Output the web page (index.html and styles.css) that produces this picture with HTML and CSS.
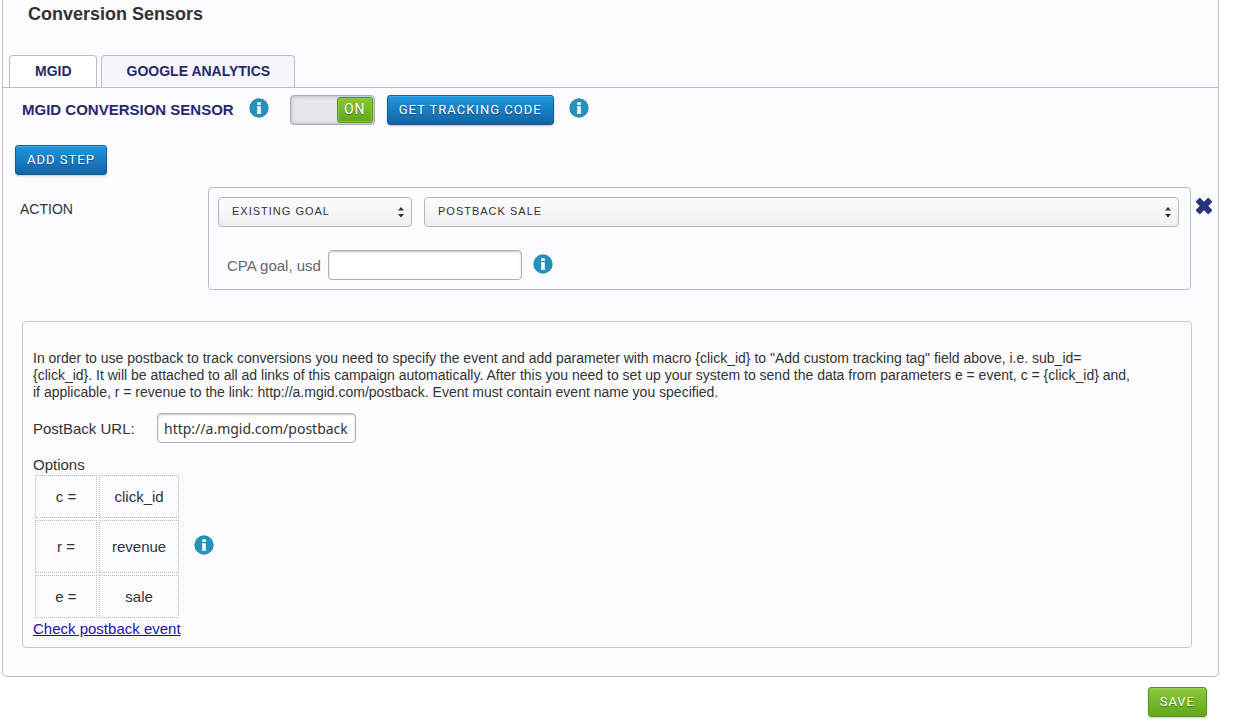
FILE: index.html
```
<!DOCTYPE html>
<html lang="en">
<head>
    <meta charset="UTF-8">
    <title>Conversion Sensors</title>
    <link rel="stylesheet" href="styles.css">
</head>
<body>
    <!-- shared icons -->
    <svg class="sprite" aria-hidden="true">
        <symbol id="icon-info" viewBox="0 0 20 20">
            <circle cx="10" cy="10" r="9.7" fill="#2492b8"/>
            <path fill="#fff" d="M8.3 4.2h3.5v2.7H8.3zM7.9 8.2h3.9v6.4h.4v1.2H7.9v-1.2h.4V9.6h-.4z"/>
        </symbol>
        <symbol id="icon-remove" viewBox="0 0 18 18">
            <path fill="#27357a" stroke="#27357a" stroke-width="2" stroke-linejoin="round" d="M4.8 1.9L9 6.1l4.2-4.2 2.9 2.9L11.9 9l4.2 4.2-2.9 2.9L9 11.9l-4.2 4.2-2.9-2.9L6.1 9 1.9 4.8z"/>
        </symbol>
    </svg>

    <form class="page">
        <div class="panel">
            <h1>Conversion Sensors</h1>

            <div class="tabs">
                <button type="button" class="tab active">MGID</button>
                <button type="button" class="tab">GOOGLE ANALYTICS</button>
            </div>

            <div class="sensor-row">
                <label class="sensor-title" for="sensor-switch">MGID CONVERSION SENSOR</label>
                <svg class="info"><use href="#icon-info"/></svg>
                <label class="switch">
                    <input type="checkbox" id="sensor-switch" checked>
                    <span class="knob">ON</span>
                </label>
                <button type="button" class="btn btn-blue">GET TRACKING CODE</button>
                <svg class="info"><use href="#icon-info"/></svg>
            </div>

            <button type="button" class="btn btn-blue add-step">ADD STEP</button>

            <div class="step">
                <div class="step-label">ACTION</div>
                <div class="step-box">
                    <div class="selects">
                        <div class="select-wrap goal-type">
                            <select aria-label="Goal type">
                                <option>EXISTING GOAL</option>
                            </select>
                            <svg class="arrows" viewBox="0 0 6 10"><path d="M0 3.5L3 0l3 3.5zM0 7l3 3.5L6 7z" fill="#333"/></svg>
                        </div>
                        <div class="select-wrap goal-name">
                            <select aria-label="Goal">
                                <option>POSTBACK SALE</option>
                            </select>
                            <svg class="arrows" viewBox="0 0 6 10"><path d="M0 3.5L3 0l3 3.5zM0 7l3 3.5L6 7z" fill="#333"/></svg>
                        </div>
                    </div>
                    <div class="cpa-row">
                        <label for="cpa">CPA goal, usd</label>
                        <input type="text" id="cpa" class="field cpa-field">
                        <svg class="info"><use href="#icon-info"/></svg>
                    </div>
                </div>
                <button type="button" class="remove" aria-label="Remove step"><svg><use href="#icon-remove"/></svg></button>
            </div>

            <div class="postback">
                <p>
                    In order to use postback to track conversions you need to specify the event and add parameter with macro {click_id} to "Add custom tracking tag" field above, i.e. sub_id=<br>
                    {click_id}. It will be attached to all ad links of this campaign automatically. After this you need to set up your system to send the data from parameters e = event, c = {click_id} and,<br>
                    if applicable, r = revenue to the link: http://a.mgid.com/postback. Event must contain event name you specified.
                </p>
                <div class="url-row">
                    <label for="postback-url">PostBack URL:</label>
                    <input type="text" id="postback-url" class="field url-field" value="http://a.mgid.com/postback">
                </div>
                <div class="options-title">Options</div>
                <div class="options">
                    <table>
                        <tbody>
                            <tr>
                                <td>c =</td>
                                <td>click_id</td>
                            </tr>
                            <tr class="tall">
                                <td>r =</td>
                                <td>revenue</td>
                            </tr>
                            <tr>
                                <td>e =</td>
                                <td>sale</td>
                            </tr>
                        </tbody>
                    </table>
                    <svg class="info"><use href="#icon-info"/></svg>
                </div>
                <a href="#">Check postback event</a>
            </div>
        </div>

        <div class="actions">
            <button type="submit" class="btn btn-green">SAVE</button>
        </div>
    </form>
</body>
</html>
```
FILE: styles.css
```
* {
    box-sizing: border-box;
}

body {
    margin: 0;
    background-color: #fff;
    color: #333;
    font-family: "Liberation Sans", Arial, sans-serif;
    font-size: 15px;
    line-height: 17px;
}

.sprite {
    display: none;
}

.page {
    padding: 0 14px 4px 2px;
}

.panel {
    display: flex;
    flex-direction: column;
    background-color: #fcfcff;
    border: 1px solid #b9bfd3;
    border-top: none;
    border-radius: 0 0 5px 5px;
    padding-bottom: 28px;
}

h1 {
    margin: 4px 25px 31px;
    font-size: 18px;
    line-height: 20px;
}

/* Tabs */
.tabs {
    display: flex;
    gap: 4px;
    padding-left: 6px;
    border-bottom: 1px solid #b4bdd3;
}

.tab {
    height: 32px;
    padding: 0 24px 1px 25px;
    background-color: #f5f5fb;
    border: 1px solid #b4bdd3;
    border-bottom: none;
    border-radius: 4px 4px 0 0;
    color: #27296b;
    font-family: inherit;
    font-size: 14px;
    font-weight: bold;
    cursor: pointer;
}

.tab.active {
    background-color: #fff;
}

.info {
    flex: none;
    width: 20px;
    height: 20px;
}

/* Sensor row */
.sensor-row {
    display: flex;
    align-items: center;
    padding: 7px 19px 0;
}

.sensor-title {
    margin-right: 15px;
    padding-bottom: 2px;
    color: #27296b;
    font-size: 15px;
    font-weight: bold;
}

.switch {
    display: flex;
    justify-content: flex-end;
    width: 85px;
    height: 30px;
    margin: 0 12px 0 21px;
    padding: 1px;
    background-color: #e6e6ec;
    border: 1px solid #a3abbd;
    border-radius: 4px;
    box-shadow: inset 0 0 4px #a9b0c2;
    cursor: pointer;
}

.switch input {
    position: absolute;
    opacity: 0;
}

.knob {
    width: 36px;
    height: 26px;
    border: 1px solid #4f9413;
    border-radius: 3px;
    background: linear-gradient(#8ac53b, #65a71c);
    box-shadow: inset 0 0 0 1px #8ecb45;
    color: #fff;
    font-family: Roboto, sans-serif;
    font-size: 14px;
    line-height: 22px;
    text-align: center;
    letter-spacing: 1px;
    text-shadow: 0 1px 1px #3f7411;
}

.btn {
    height: 30px;
    padding: 0 11px;
    border: 1px solid;
    border-radius: 3px;
    color: #fff;
    font-family: Roboto, sans-serif;
    font-size: 13px;
    line-height: 26px;
    letter-spacing: 1px;
    cursor: pointer;
}

.btn-blue {
    background: linear-gradient(#1e98dd, #1463a6);
    border-color: #125f96;
    box-shadow: inset 0 1px 0 #3cabe7, 0 1px 2px #b8c4d4;
    text-shadow: 0 1px 1px #0c4f82;
}

.btn-green {
    background: linear-gradient(#8bc83d, #62a51b);
    border-color: #549819;
    box-shadow: inset 0 1px 0 #9bd257, 0 1px 2px #c4d0b8;
    text-shadow: 0 1px 1px #3f7411;
}

.btn + .info {
    margin: 0 0 4px 15px;
}

.sensor-title + .info {
    margin-bottom: 4px;
}

.add-step {
    align-self: flex-start;
    margin: 20px 0 12px 12px;
}

/* Conversion step */
.step {
    display: flex;
    align-items: flex-start;
    padding: 0 5px 0 17px;
}

.step-label {
    flex: none;
    width: 188px;
    padding-top: 14px;
    font-size: 14px;
}

.step-box {
    flex: 1;
    padding: 9px 11px 9px 9px;
    border: 1px solid #b4bfd3;
    border-radius: 4px;
}

.selects {
    display: flex;
    gap: 12px;
}

.select-wrap {
    position: relative;
}

.goal-type {
    width: 194px;
}

.goal-name {
    flex: 1;
}

.select-wrap select {
    appearance: none;
    display: block;
    width: 100%;
    height: 30px;
    padding: 0 13px 2px;
    background: linear-gradient(#fdfdff, #efeff1);
    border: 1px solid #b5b5bc;
    border-radius: 4px;
    color: #333;
    font-family: inherit;
    font-size: 11px;
    letter-spacing: 1px;
}

.arrows {
    position: absolute;
    top: 10px;
    right: 8px;
    width: 6px;
    height: 10px;
    overflow: visible;
    pointer-events: none;
}

.cpa-row {
    display: flex;
    align-items: center;
    margin-top: 23px;
    padding-left: 9px;
    color: #666;
}

.field {
    height: 30px;
    background-color: #fff;
    border: 1px solid #b0b0b8;
    border-radius: 4px;
    box-shadow: inset 0 1px 2px #c4c4cc;
    color: #333;
}

.cpa-field {
    width: 194px;
    margin: 0 11px 0 7px;
}

.cpa-row .info {
    margin-bottom: 3px;
}

.remove {
    width: 18px;
    height: 18px;
    margin: 10px 0 0 4px;
    padding: 0;
    background: none;
    border: none;
    cursor: pointer;
}

.remove svg {
    display: block;
    width: 18px;
    height: 18px;
}

/* Postback help */
.postback {
    margin: 31px 26px 0 19px;
    padding: 28px 10px 10px;
    border: 1px solid #c8c8ce;
    border-radius: 4px;
}

.postback p {
    margin: 0;
    font-size: 14px;
}

.url-row {
    display: flex;
    align-items: center;
    margin: 12px 0 13px;
}

.url-row label {
    width: 124px;
}

.url-field {
    width: 199px;
    padding: 0 6px;
    font-family: "Noto Sans", sans-serif;
    font-size: 14px;
}

.options {
    display: flex;
    align-items: center;
    gap: 13px;
}

.options table {
    border-spacing: 2px;
}

.options td {
    height: 43px;
    padding: 0 12px;
    border: 1px dotted #bbb;
    text-align: center;
}

.options td:first-child {
    min-width: 62px;
}

.options .tall td {
    height: 53px;
}

.options .info {
    margin-bottom: 4px;
}

.postback a {
    color: #1a0fb8;
}

.actions {
    display: flex;
    justify-content: flex-end;
    padding: 10px 12px 0 0;
}
```
